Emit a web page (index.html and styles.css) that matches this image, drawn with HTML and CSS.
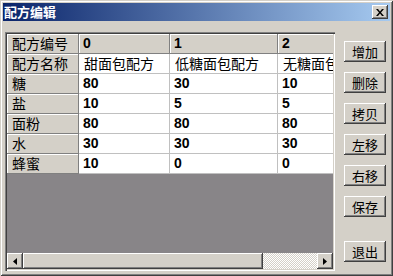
FILE: index.html
```html
<!DOCTYPE html>
<html lang="zh-CN">
<head>
  <meta charset="UTF-8">
  <title>配方编辑</title>
  <link rel="stylesheet" href="styles.css">
</head>
<body>
  <div class="window">
    <div class="titlebar">
      <span class="title">配方编辑</span>
      <span class="close">
        <svg width="8" height="7" viewBox="0 0 8 7"><path d="M0 0h2l2 2.5 2-2.5h2L5 3.5 8 7H6L4 4.5 2 7H0l3-3.5z" fill="#000"/></svg>
      </span>
    </div>
    <div class="main">
      <div class="frame">
        <div class="cells">
          <div class="grid">
            <div class="fix">配方编号</div><div class="fix num">0</div><div class="fix num">1</div><div class="fix num">2</div><div class="fix num">3</div>
            <div class="fix">配方名称</div><div class="cell">甜面包配方</div><div class="cell">低糖面包配方</div><div class="cell">无糖面包配方</div><div class="cell"></div>
            <div class="fix">糖</div><div class="cell num">80</div><div class="cell num">30</div><div class="cell num">10</div><div class="cell"></div>
            <div class="fix">盐</div><div class="cell num">10</div><div class="cell num">5</div><div class="cell num">5</div><div class="cell"></div>
            <div class="fix">面粉</div><div class="cell num">80</div><div class="cell num">80</div><div class="cell num">80</div><div class="cell"></div>
            <div class="fix">水</div><div class="cell num">30</div><div class="cell num">30</div><div class="cell num">30</div><div class="cell"></div>
            <div class="fix">蜂蜜</div><div class="cell num">10</div><div class="cell num">0</div><div class="cell num">0</div><div class="cell"></div>
          </div>
        </div>
        <div class="hscroll">
          <span class="sbtn"><svg width="4" height="7" viewBox="0 0 4 7"><path d="M4 0v7L0 3.5z" fill="#000"/></svg></span>
          <span class="thumb"></span>
          <span class="track"></span>
          <span class="sbtn"><svg width="4" height="7" viewBox="0 0 4 7"><path d="M0 0v7l4-3.5z" fill="#000"/></svg></span>
        </div>
      </div>
      <div class="buttons">
        <button class="btn">增加</button>
        <button class="btn">删除</button>
        <button class="btn">拷贝</button>
        <button class="btn">左移</button>
        <button class="btn">右移</button>
        <button class="btn">保存</button>
        <button class="btn exit">退出</button>
      </div>
    </div>
  </div>
</body>
</html>
```

FILE: styles.css
```css
body { margin: 0; font-family: "Noto Sans CJK SC", sans-serif; }
.window { width: 393px; height: 276px; box-sizing: border-box; padding: 3px; background: #d4d0c8; display: flex; flex-direction: column;
  box-shadow: inset 1px 1px #d4d0c8, inset -1px -1px #404040, inset 2px 2px #fff, inset -2px -2px #808080; }
.titlebar { height: 18px; display: flex; align-items: center; justify-content: space-between; padding: 0 2px 0 1px;
  background: linear-gradient(to right, #0a246a, #a6caf0); }
.title { color: #fff; font-weight: bold; font-size: 13px; line-height: 18px; }
.close { width: 16px; height: 14px; box-sizing: border-box; background: #d4d0c8; display: flex; align-items: center; justify-content: center;
  box-shadow: inset -1px -1px #404040, inset 1px 1px #fff, inset -2px -2px #808080; }
.main { flex: 1; display: flex; gap: 9px; padding: 11px 4px 2px 2px; min-height: 0; }
.frame { width: 330px; box-sizing: border-box; padding: 2px; display: flex; flex-direction: column;
  box-shadow: inset 1px 1px #808080, inset 2px 2px #404040, inset -1px -1px #fff, inset -2px -2px #d4d0c8; }
.cells { flex: 1; background: #888588; overflow: hidden; }
.grid { display: grid; grid-template-columns: 72px 91px 108px 100px 60px; grid-auto-rows: 20px; }
.grid > div { box-sizing: border-box; font-size: 14px; line-height: 19px; padding-left: 5px; white-space: nowrap; overflow: hidden; }
.fix { background: #d4d0c8; border-right: 1px solid #808080; border-bottom: 1px solid #808080; box-shadow: inset 1px 1px #fff; }
.cell { background: #fff; border-right: 1px solid #c0c0c0; border-bottom: 1px solid #c0c0c0; }
.grid > .num { font-family: "Liberation Sans", sans-serif; font-weight: bold; font-size: 14px; padding-left: 4px; }
.hscroll { height: 16px; display: flex; }
.sbtn { width: 16px; height: 16px; box-sizing: border-box; background: #d4d0c8; display: flex; align-items: center; justify-content: center;
  box-shadow: inset -1px -1px #404040, inset 1px 1px #fff, inset -2px -2px #808080; }
.thumb { width: 240px; background: #d4d0c8; box-shadow: inset -1px -1px #404040, inset 1px 1px #fff, inset -2px -2px #808080; }
.track { flex: 1; background: repeating-conic-gradient(#d4d0c8 0 25%, #fff 0 50%) 0 0 / 2px 2px; }
.buttons { display: flex; flex-direction: column; gap: 10px; padding-top: 9px; }
.btn { width: 42px; height: 21px; padding: 0; border: none; background: #d4d0c8; font-family: "Noto Sans CJK SC", sans-serif; font-size: 13px; line-height: 19px; color: #000;
  box-shadow: inset -1px -1px #404040, inset 1px 1px #fff, inset -2px -2px #808080; }
.exit { margin-top: 14px; }
```
